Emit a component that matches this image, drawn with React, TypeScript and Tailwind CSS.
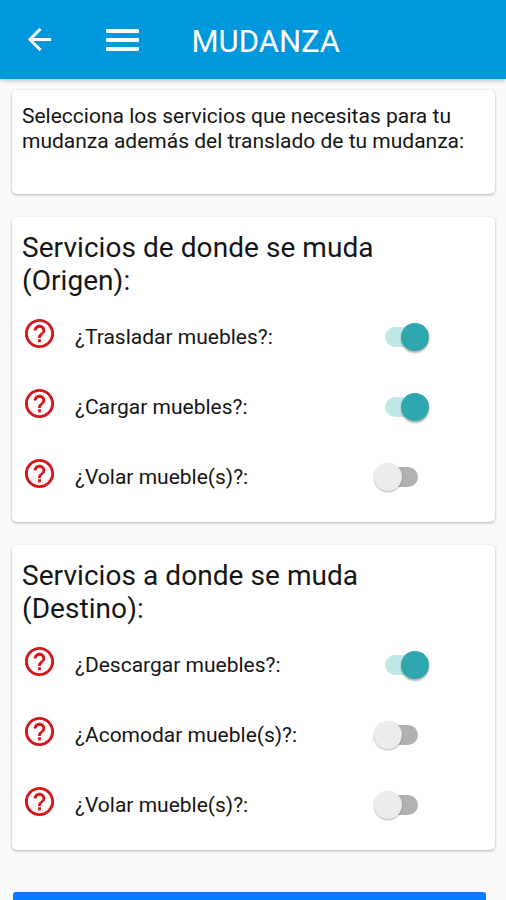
import React, { useState } from "react";

function HelpIcon() {
  return (
    <svg viewBox="0 0 24 24" className="size-[35px] shrink-0 fill-[#d3171b]">
      <path d="M11 18h2v-2h-2v2zm1-16C6.48 2 2 6.48 2 12s4.48 10 10 10 10-4.48 10-10S17.52 2 12 2zm0 18c-4.41 0-8-3.59-8-8s3.59-8 8-8 8 3.59 8 8-3.59 8-8 8zm0-14c-2.21 0-4 1.79-4 4h2c0-1.1.9-2 2-2s2 .9 2 2c0 2-3 1.75-3 5h2c0-2.25 3-2.5 3-5 0-2.21-1.79-4-4-4z" />
    </svg>
  );
}

function Toggle({ initial, label }: { initial: boolean; label: string }) {
  const [on, setOn] = useState(initial);
  return (
    <button
      role="switch"
      aria-checked={on}
      aria-label={label}
      onClick={() => setOn(!on)}
      className="flex h-7 w-14 items-center justify-center"
    >
      <span className={`flex h-[20px] w-[33px] items-center rounded-full ${on ? "justify-end bg-[#bfe9e6]" : "justify-start bg-[#b1b1b1]"}`}>
        <span
          className={`size-7 shrink-0 rounded-full ${
            on ? "-mr-[11px] bg-[#2fa7b0] shadow-[0_2px_2px_rgba(0,0,0,0.3)]" : "-ml-[11px] bg-[#ececec] shadow-[0_1px_2px_rgba(0,0,0,0.3)]"
          }`}
        />
      </span>
    </button>
  );
}

function Row({ label, on }: { label: string; on: boolean }) {
  return (
    <div className="flex h-[70.3px] items-start pl-[9.5px]">
      <HelpIcon />
      <span className="ml-[18.5px] mt-[9px] w-[298px] text-[21px] leading-[25px]">{label}</span>
      <span className="mt-[7px]">
        <Toggle initial={on} label={label} />
      </span>
    </div>
  );
}

type Service = { label: string; on: boolean };

const CARD = "rounded-[5px] bg-white shadow-[0_1px_3px_rgba(0,0,0,0.3)]";

function ServiceCard({ title, services }: { title: [string, string]; services: Service[] }) {
  return (
    <section className={`${CARD} h-[305.5px] pt-[14px]`}>
      <h2 className="px-[10px] text-[28px] leading-[33px] tracking-[0.06px]">
        {title[0]}
        <br />
        {title[1]}
      </h2>
      <div className="mt-[19.3px]">
        {services.map((s) => (
          <Row key={s.label} {...s} />
        ))}
      </div>
    </section>
  );
}

export default function App() {
  return (
    <div className="h-[900px] w-[506px] overflow-hidden bg-[#fafafa] font-['Roboto',sans-serif] text-[#151515]">
      <header className="relative flex h-[79px] items-center bg-[#0098dc] pl-[22px] pt-[2px] text-white shadow-[0_1px_5px_rgba(0,0,0,0.3)]">
        <svg viewBox="0 0 24 24" className="mt-[-2px] size-[35px] fill-white">
          <path d="M20 11H7.83l5.59-5.59L12 4l-8 8 8 8 1.41-1.41L7.83 13H20v-2z" />
        </svg>
        <div className="ml-[49px] mt-[-2px] flex w-[33px] flex-col gap-[5px]">
          <span className="h-[4px] rounded-[1px] bg-white" />
          <span className="h-[4px] rounded-[1px] bg-white" />
          <span className="h-[4px] rounded-[1px] bg-white" />
        </div>
        <h1 className="ml-[52.5px] mt-px text-[31px] leading-none">MUDANZA</h1>
      </header>
      <main className="flex flex-col pl-[12px] pr-[11px] pt-[11px]">
        <section className={`${CARD} h-[104px] px-[10px] pt-[14px] text-[21px] leading-[25px]`}>
          Selecciona los servicios que necesitas para tu
          <br />
          mudanza además del translado de tu mudanza:
        </section>
        <div className="mt-[22.5px] flex flex-col gap-[22.5px]">
          <ServiceCard
            title={["Servicios de donde se muda", "(Origen):"]}
            services={[
              { label: "¿Trasladar muebles?:", on: true },
              { label: "¿Cargar muebles?:", on: true },
              { label: "¿Volar mueble(s)?:", on: false },
            ]}
          />
          <ServiceCard
            title={["Servicios a donde se muda", "(Destino):"]}
            services={[
              { label: "¿Descargar muebles?:", on: true },
              { label: "¿Acomodar mueble(s)?:", on: false },
              { label: "¿Volar mueble(s)?:", on: false },
            ]}
          />
        </div>
        <div className="ml-px mr-[9px] mt-[42px] h-[50px] rounded-[3px] bg-[#087bff]" />
      </main>
    </div>
  );
}
